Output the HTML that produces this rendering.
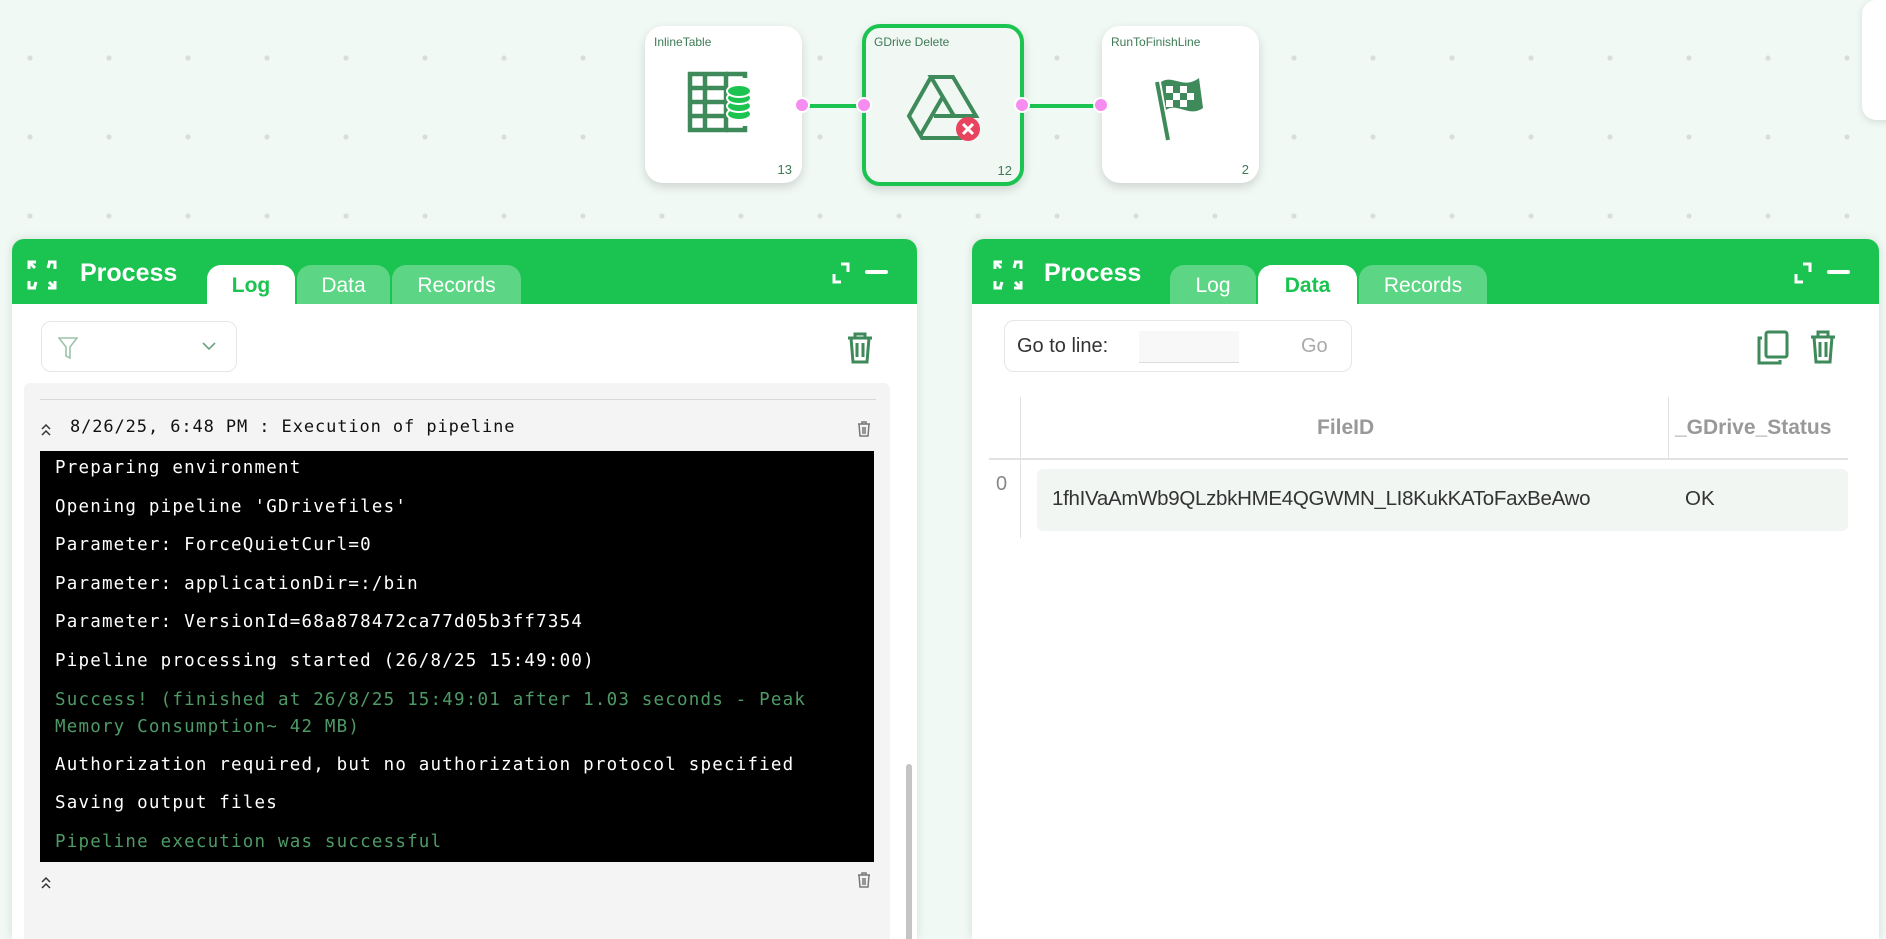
<!DOCTYPE html>
<html><head><meta charset="utf-8"><style>
*{box-sizing:border-box;margin:0;padding:0}
body{width:1886px;height:898px;overflow:hidden;position:relative;font-family:"Liberation Sans",sans-serif;background:#f1f9f5}
.abs{position:absolute}
.node{position:absolute;background:#fff;border-radius:18px;box-shadow:0 4px 10px rgba(0,0,0,.15)}
.node .t{position:absolute;left:9px;top:9px;font-size:12px;color:#3d7a55}
.node .n{position:absolute;right:10px;bottom:6px;font-size:13px;color:#3d7a55}
.port{position:absolute;width:16px;height:16px;border-radius:50%;background:#f78cf0;border:2px solid #fff}
.panel{position:absolute;top:239px;background:#fff;border-radius:12px 12px 0 0;box-shadow:0 0 10px rgba(0,0,0,.12);overflow:hidden;height:700px}
.hdr{height:65px;background:#1bc350;position:relative}
.title{position:absolute;left:68px;top:20px;color:#fff;font-weight:bold;font-size:25px}
.tab{position:absolute;top:26px;height:39px;border-radius:14px 14px 0 0;background:#5cd585;color:#fff;font-size:21px;text-align:center;line-height:42px}
.tab.act{background:#fff;color:#1bc350;font-weight:bold}
.mono{font-family:"DejaVu Sans Mono","Liberation Mono",monospace;font-size:17.5px;letter-spacing:1.2px}
.line{position:absolute;left:15px;color:#fff;white-space:nowrap}
.g{color:#4e9a66}
</style></head><body>
<svg class="abs" style="left:0;top:0" width="1886" height="898"><defs><pattern id="d" x="-9.5" y="18.5" width="79" height="79" patternUnits="userSpaceOnUse"><circle cx="39.5" cy="39.5" r="2.6" fill="#d8dedb"/></pattern></defs><rect width="1886" height="898" fill="url(#d)"/></svg>
<div class="abs" style="left:1862px;top:0;width:40px;height:120px;background:#fff;border-radius:14px;box-shadow:0 2px 8px rgba(0,0,0,.12)"></div>

<div class="abs" style="left:802px;top:104px;width:62px;height:4px;background:#1bc350"></div>
<div class="abs" style="left:1022px;top:104px;width:80px;height:4px;background:#1bc350"></div>

<div class="node" style="left:645px;top:26px;width:157px;height:157px">
<div class="t">InlineTable</div>
<svg class="abs" style="left:42px;top:45px" width="70" height="70" viewBox="0 0 70 70" fill="none" stroke="#3f8a5a" stroke-width="4.5">
<rect x="3" y="3" width="36" height="56"/><line x1="3" y1="17" x2="39" y2="17"/><line x1="3" y1="31" x2="39" y2="31"/><line x1="3" y1="45" x2="39" y2="45"/><line x1="18" y1="3" x2="18" y2="59"/>
<path d="M39 3h19v4M39 59h19v-4"/>
<g fill="#1bc350" stroke="#fff" stroke-width="2"><ellipse cx="52" cy="43" rx="12" ry="6"/><ellipse cx="52" cy="35" rx="12" ry="6"/><ellipse cx="52" cy="27" rx="12" ry="6"/><ellipse cx="52" cy="20" rx="12" ry="6"/></g>
</svg>
<div class="n">13</div></div>
<div class="node" style="left:862px;top:24px;width:162px;height:162px;background:#f1f8f3;border:4px solid #1bc350">
<div class="t" style="left:8px;top:7px">GDrive Delete</div>
<svg class="abs" style="left:40px;top:45px" width="80" height="70" viewBox="0 0 80 70" fill="none" stroke="#3f8a5a" stroke-width="4">
<path d="M25 4h22l23 39H48zM25 4L3 43l13 22h40M25 4l23 39M14 63l22-38M28 43h20"/>
<circle cx="62" cy="56" r="12" fill="#e8445f" stroke="none"/><path d="M57 51l10 10M67 51l-10 10" stroke="#fff" stroke-width="3"/>
</svg>
<div class="n" style="right:8px;bottom:4px">12</div></div>
<div class="node" style="left:1102px;top:26px;width:157px;height:157px">
<div class="t">RunToFinishLine</div>
<svg class="abs" style="left:50px;top:44px" width="60" height="72" viewBox="0 0 60 72">
<line x1="5" y1="12" x2="16" y2="70" stroke="#3f8a5a" stroke-width="4"/>
<path d="M9 12c12-8 22 8 38-4l4 30c-14 10-26-6-37 2z" fill="#3f8a5a"/>
<g fill="#fff"><rect x="14" y="16" width="7" height="7"/><rect x="28" y="16" width="7" height="7"/><rect x="21" y="23" width="7" height="7"/><rect x="35" y="23" width="7" height="7"/><rect x="14" y="30" width="7" height="7"/><rect x="28" y="30" width="7" height="7"/></g>
</svg>
<div class="n">2</div></div>
<div class="port" style="left:794px;top:97px"></div>
<div class="port" style="left:856px;top:97px"></div>
<div class="port" style="left:1014px;top:97px"></div>
<div class="port" style="left:1093px;top:97px"></div>

<div class="panel" style="left:12px;width:905px">
<div class="hdr">
<svg class="abs" style="left:14px;top:20px" width="32" height="32" viewBox="0 0 32 32" fill="none" stroke="#fff" stroke-width="3"><path d="M3 10V3h7M3 3l6 6M29 22v7h-7M29 29l-6-6M22 3h7v7M3 22v7h7M24 2l-2 7M8 30l2-7"/></svg>
<div class="title">Process</div>
<div class="tab act" style="left:195px;width:88px">Log</div>
<div class="tab" style="left:285px;width:93px">Data</div>
<div class="tab" style="left:380px;width:129px">Records</div>
<svg class="abs" style="left:820px;top:22px" width="60" height="24" viewBox="0 0 60 24" fill="none" stroke="#fff" stroke-width="3"><path d="M2 13v8h7M16 11V3H9"/><line x1="35" y1="11" x2="54" y2="11" stroke-width="4" stroke-linecap="round"/></svg>
</div>
<div class="abs" style="left:29px;top:82px;width:196px;height:51px;border:1px solid #e6e6e6;border-radius:10px">
<svg class="abs" style="left:16px;top:15px" width="20" height="22" viewBox="0 0 20 22" fill="none" stroke="#9cc3a8" stroke-width="1.6"><path d="M1 1h18l-7 9v11l-4-2v-9z"/></svg>
<svg class="abs" style="left:160px;top:20px" width="14" height="9" viewBox="0 0 14 9" fill="none" stroke="#6fa482" stroke-width="1.6"><path d="M1 1l6 6 6-6"/></svg>
</div>
<svg class="abs" style="left:834px;top:93px" width="28" height="32" viewBox="0 0 28 32" fill="none" stroke="#3f8a5a" stroke-width="3"><path d="M2 6h24M9 6V2h10v4M5 6l2 24h14l2-24M11 11v14M17 11v14"/></svg>
<div class="abs" style="left:12px;top:144px;width:866px;height:560px;background:#f4f4f4;border-radius:6px"></div>
<div class="abs" style="left:28px;top:160px;width:836px;height:1px;background:#d8d8d8"></div>
<svg class="abs" style="left:28px;top:184px" width="12" height="14" viewBox="0 0 12 14" fill="none" stroke="#333" stroke-width="1.5"><path d="M2 6l4-4 4 4M2 12l4-4 4 4"/></svg>
<div class="abs mono" style="left:58px;top:178px;font-size:17px;letter-spacing:0.9px;color:#111">8/26/25, 6:48 PM : Execution of pipeline</div>
<svg class="abs" style="left:845px;top:182px" width="14" height="16" viewBox="0 0 14 16" fill="none" stroke="#777" stroke-width="1.5"><path d="M1 3h12M5 3V1h4v2M2 3l1 12h8l1-12M6 6v7M8 6v7"/></svg>
<div class="abs mono" style="left:28px;top:212px;width:834px;height:411px;background:#000">
<div class="line" style="top:7px">Preparing environment</div>
<div class="line" style="top:46px">Opening pipeline 'GDrivefiles'</div>
<div class="line" style="top:84px">Parameter: ForceQuietCurl=0</div>
<div class="line" style="top:123px">Parameter: applicationDir=:/bin</div>
<div class="line" style="top:161px">Parameter: VersionId=68a878472ca77d05b3ff7354</div>
<div class="line" style="top:200px">Pipeline processing started (26/8/25 15:49:00)</div>
<div class="line g" style="top:239px">Success! (finished at 26/8/25 15:49:01 after 1.03 seconds - Peak</div>
<div class="line g" style="top:266px">Memory Consumption~ 42 MB)</div>
<div class="line" style="top:304px">Authorization required, but no authorization protocol specified</div>
<div class="line" style="top:342px">Saving output files</div>
<div class="line g" style="top:381px">Pipeline execution was successful</div>
</div>
<svg class="abs" style="left:28px;top:637px" width="12" height="14" viewBox="0 0 12 14" fill="none" stroke="#333" stroke-width="1.5"><path d="M2 6l4-4 4 4M2 12l4-4 4 4"/></svg>
<svg class="abs" style="left:845px;top:633px" width="14" height="16" viewBox="0 0 14 16" fill="none" stroke="#777" stroke-width="1.5"><path d="M1 3h12M5 3V1h4v2M2 3l1 12h8l1-12M6 6v7M8 6v7"/></svg>
<div class="abs" style="left:894px;top:525px;width:6px;height:200px;background:#c4c4c4;border-radius:3px"></div>
</div>

<div class="panel" style="left:972px;width:907px">
<div class="hdr">
<svg class="abs" style="left:20px;top:20px" width="32" height="32" viewBox="0 0 32 32" fill="none" stroke="#fff" stroke-width="3"><path d="M3 10V3h7M3 3l6 6M29 22v7h-7M29 29l-6-6M22 3h7v7M3 22v7h7M24 2l-2 7M8 30l2-7"/></svg>
<div class="title" style="left:72px">Process</div>
<div class="tab" style="left:198px;width:86px">Log</div>
<div class="tab act" style="left:286px;width:99px">Data</div>
<div class="tab" style="left:387px;width:128px">Records</div>
<svg class="abs" style="left:822px;top:22px" width="60" height="24" viewBox="0 0 60 24" fill="none" stroke="#fff" stroke-width="3"><path d="M2 13v8h7M16 11V3H9"/><line x1="35" y1="11" x2="54" y2="11" stroke-width="4" stroke-linecap="round"/></svg>
</div>
<div class="abs" style="left:32px;top:81px;width:348px;height:52px;border:1px solid #e6e6e6;border-radius:10px">
<div class="abs" style="left:12px;top:14px;font-size:20px;color:#333">Go to line:</div>
<div class="abs" style="left:134px;top:10px;width:100px;height:32px;background:#f8f8f8;border-bottom:1px solid #ddd"></div>
<div class="abs" style="left:296px;top:14px;font-size:20px;color:#aaa">Go</div>
</div>
<svg class="abs" style="left:784px;top:91px" width="34" height="36" viewBox="0 0 34 36" fill="none" stroke="#3f8a5a" stroke-width="3"><rect x="10" y="2" width="21" height="25" rx="2"/><path d="M6 8H3v25h21v-3"/></svg>
<svg class="abs" style="left:837px;top:91px" width="28" height="34" viewBox="0 0 28 34" fill="none" stroke="#3f8a5a" stroke-width="3"><path d="M2 7h24M9 7V2h10v5M5 7l2 25h14l2-25M11 12v15M17 12v15"/></svg>
<div class="abs" style="left:48px;top:158px;width:1px;height:141px;background:#e2e2e2"></div>
<div class="abs" style="left:696px;top:158px;width:1px;height:62px;background:#e2e2e2"></div>
<div class="abs" style="left:17px;top:219px;width:859px;height:2px;background:#e2e2e2"></div>
<div class="abs" style="left:345px;top:177px;font-size:21px;font-weight:bold;color:#999">FileID</div>
<div class="abs" style="left:703px;top:177px;font-size:21px;font-weight:bold;color:#999">_GDrive_Status</div>
<div class="abs" style="left:24px;top:234px;font-size:20px;color:#888">0</div>
<div class="abs" style="left:65px;top:230px;width:811px;height:62px;background:#f1f6f3;border-radius:6px"></div>
<div class="abs" style="left:80px;top:248px;font-size:20.5px;color:#333;letter-spacing:-0.3px">1fhIVaAmWb9QLzbkHME4QGWMN_LI8KukKAToFaxBeAwo</div>
<div class="abs" style="left:713px;top:248px;font-size:20.5px;color:#333">OK</div>
</div>
</body></html>
